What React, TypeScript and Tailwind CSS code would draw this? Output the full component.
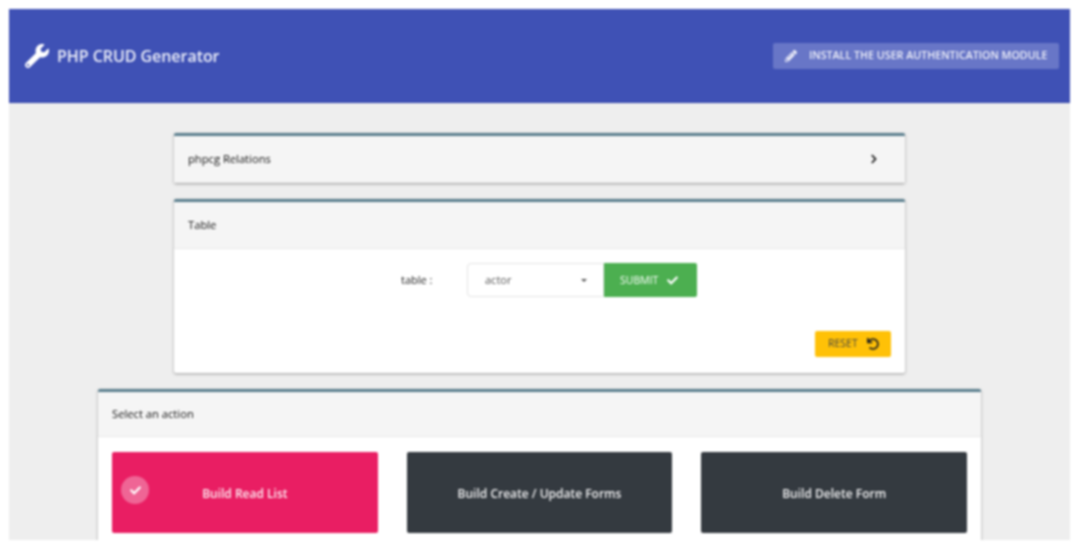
import { FaCheck, FaChevronRight, FaPencilAlt, FaUndo, FaWrench } from 'react-icons/fa';
import { clsx } from 'clsx';

function CardHead({ title, short, children }: { title: string; short?: boolean; children?: React.ReactNode }) {
  return (
    <div
      className={clsx(
        'flex items-center justify-between bg-[#f5f5f5] border-b border-[#e8e8e8] pl-[14px] pr-[26px] text-[11.2px] text-[#111]',
        short ? 'h-[45px]' : 'h-[47px]'
      )}
    >
      <span>{title}</span>
      {children}
    </div>
  );
}

export default function App() {
  return (
    <div className="h-[549px] overflow-hidden bg-white p-[9px] pr-[10px] font-['Open_Sans',sans-serif] blur-[0.8px]">
      <div className="h-[531px] overflow-hidden bg-[#eeeeee]">
        {/* Header */}
        <header className="flex items-center justify-between h-[94px] bg-[#3f51b5] border-b border-[#3546ab] pl-[16px] pr-[11px] text-white">
          <div className="flex items-center gap-[8px]">
            <FaWrench className="w-[24px] h-[24px]" />
            <span className="text-[16px] font-semibold tracking-[-0.05px] text-[#eef0fa]">PHP CRUD Generator</span>
          </div>
          <div className="flex items-center gap-[12px] w-[286px] h-[26px] pl-[12px] rounded-[2px] bg-[#6876c7] text-[10.7px] font-semibold uppercase text-[#f0f1fa] whitespace-nowrap">
            <FaPencilAlt className="w-[12px] h-[12px]" />
            <span>Install the user authentication module</span>
          </div>
        </header>

        <main className="flex flex-col items-center pt-[30px]">
          {/* Relations */}
          <section className="w-[731px] border-t-[3px] border-[#5b7f8e] rounded-[2px] bg-[#f5f5f5] shadow-[0_1px_3px_rgba(0,0,0,0.35)]">
            <CardHead title="phpcg Relations">
              <FaChevronRight className="w-[10px] h-[10px] text-[#111]" />
            </CardHead>
          </section>

          {/* Table */}
          <section className="w-[731px] mt-[16px] border-t-[3px] border-[#5b7f8e] rounded-[2px] bg-white shadow-[0_1px_3px_rgba(0,0,0,0.35)]">
            <CardHead title="Table" />
            <div className="h-[124px] px-[14px] pt-[14px]">
              <div className="flex items-center pl-[213px]">
                <span className="w-[66px] text-[11px] text-[#222]">table :</span>
                <div className="flex items-center justify-between w-[137px] h-[34px] pl-[17px] pr-[16px] border border-[#e4e4e4] rounded-l-[4px] text-[11px] text-[#555]">
                  <span>actor</span>
                  <span className="w-0 h-0 border-x-[3px] border-t-[3px] border-x-transparent border-t-[#555]" />
                </div>
                <div className="flex items-center gap-[9px] w-[93px] h-[34px] pl-[16px] pt-[1px] rounded-r-[2px] bg-[#4caf50] text-[10.5px] text-white">
                  <span>SUBMIT</span>
                  <FaCheck className="w-[11px] h-[11px]" />
                </div>
              </div>
              <div className="flex justify-end mt-[34px]">
                <div className="flex items-center gap-[9px] w-[76px] h-[26px] pl-[13px] rounded-[2px] bg-[#ffc107] text-[10.5px] text-[#444]">
                  <span>RESET</span>
                  <FaUndo className="w-[12px] h-[12px] text-[#222]" />
                </div>
              </div>
            </div>
          </section>

          {/* Actions */}
          <section className="w-[883px] mt-[16px] border-t-[3px] border-[#5b7f8e] rounded-[2px] bg-white shadow-[0_1px_3px_rgba(0,0,0,0.35)]">
            <CardHead title="Select an action" short />
            <div className="grid grid-cols-3 gap-x-[29px] px-[14px] pt-[15px] pb-[20px]">
              <div className="relative flex items-center justify-center h-[81px] pt-[2px] rounded-[2px] bg-[#e91e63] text-[12px] font-semibold text-[#fdeef3]">
                <span className="absolute left-[9px] top-[24px] flex items-center justify-center w-[28px] h-[28px] rounded-full bg-[#ef6595]">
                  <FaCheck className="w-[11px] h-[11px] text-white" />
                </span>
                Build Read List
              </div>
              <div className="flex items-center justify-center h-[81px] pt-[2px] rounded-[2px] bg-[#343a40] text-[12px] font-semibold text-[#f2f2f3]">
                Build Create / Update Forms
              </div>
              <div className="flex items-center justify-center h-[81px] pt-[2px] rounded-[2px] bg-[#343a40] text-[12px] font-semibold text-[#f2f2f3]">
                Build Delete Form
              </div>
            </div>
          </section>
        </main>
      </div>
    </div>
  );
}
